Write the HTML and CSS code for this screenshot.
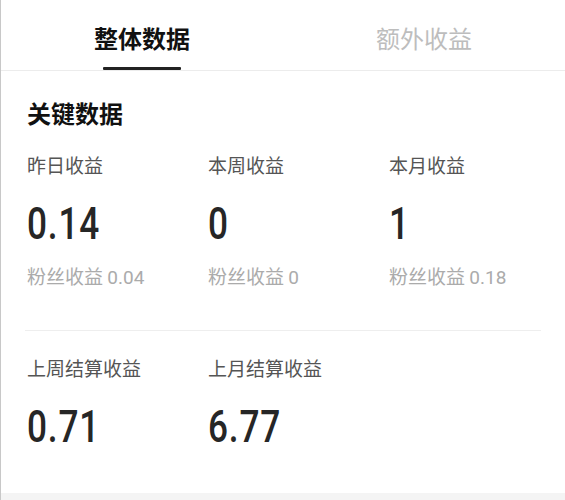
FILE: index.html
```html
<!DOCTYPE html>
<html lang="zh">
<head>
<meta charset="utf-8">
<link rel="stylesheet" href="styles.css">
</head>
<body>
<div class="page">
  <div class="tabs">
    <div class="tab active"><span class="tab-text">整体数据</span><span class="tab-bar"></span></div>
    <div class="tab"><span class="tab-text">额外收益</span></div>
  </div>
  <div class="section">
    <div class="title">关键数据</div>
    <div class="grid row1">
      <div class="cell">
        <div class="label">昨日收益</div>
        <div class="num"><span class="num-text">0.14</span></div>
        <div class="sub">粉丝收益 <span class="subnum">0.04</span></div>
      </div>
      <div class="cell">
        <div class="label">本周收益</div>
        <div class="num"><span class="num-text">0</span></div>
        <div class="sub">粉丝收益 <span class="subnum">0</span></div>
      </div>
      <div class="cell">
        <div class="label">本月收益</div>
        <div class="num"><span class="num-text">1</span></div>
        <div class="sub">粉丝收益 <span class="subnum">0.18</span></div>
      </div>
    </div>
    <div class="divider"></div>
    <div class="grid row2">
      <div class="cell">
        <div class="label">上周结算收益</div>
        <div class="num"><span class="num-text">0.71</span></div>
      </div>
      <div class="cell">
        <div class="label">上月结算收益</div>
        <div class="num"><span class="num-text">6.77</span></div>
      </div>
    </div>
  </div>
</div>
<div class="band"></div>
</body>
</html>
```
FILE: styles.css
```css
html, body {
  margin: 0;
  padding: 0;
  background: #ffffff;
}
body {
  font-family: "Noto Sans CJK SC", "Noto Sans", sans-serif;
  color: #222;
}
.page {
  height: 493px;
  border-left: 1px solid #c8c8c8;
  box-sizing: border-box;
  overflow: hidden;
}
.tabs {
  display: flex;
  height: 70px;
  border-bottom: 1px solid #ececec;
}
.tab {
  flex: 1;
  display: flex;
  flex-direction: column;
  align-items: center;
  position: relative;
}
.tab-text {
  margin-top: 26px;
  font-size: 24px;
  line-height: 24px;
  color: #bdbdbd;
}
.tab.active .tab-text {
  color: #111;
  font-weight: 700;
}
.tab-bar {
  position: absolute;
  bottom: 0;
  left: 50%;
  width: 78px;
  height: 3px;
  margin-left: -39px;
  background: #222;
  border-radius: 1px;
}
.section {
  padding: 30px 24px 0 26px;
}
.title {
  font-size: 24px;
  line-height: 24px;
  font-weight: 700;
  color: #111;
}
.grid {
  display: grid;
  grid-template-columns: 181px 181px 181px;
}
.row1 {
  margin-top: 30px;
}
.label {
  font-size: 19px;
  line-height: 19px;
  color: #555;
}
.num {
  margin-top: 28px;
  height: 44px;
  font-family: Roboto, "Liberation Sans", sans-serif;
  font-weight: 500;
  font-size: 44px;
  line-height: 44px;
  color: #262626;
}
.num-text {
  display: inline-block;
  transform: scaleX(0.8);
  transform-origin: 0 50%;
  letter-spacing: 1px;
}
.sub {
  margin-top: 20px;
  font-size: 19px;
  line-height: 19px;
  color: #ababab;
}
.subnum {
  font-family: Roboto, sans-serif;
}
.divider {
  margin-top: 43px;
  margin-left: -2px;
  height: 1px;
  background: #eeeeee;
}
.row2 {
  margin-top: 27px;
}
.band {
  height: 7px;
  background: #f4f4f4;
  border-left: 1px solid #c8c8c8;
}
```
